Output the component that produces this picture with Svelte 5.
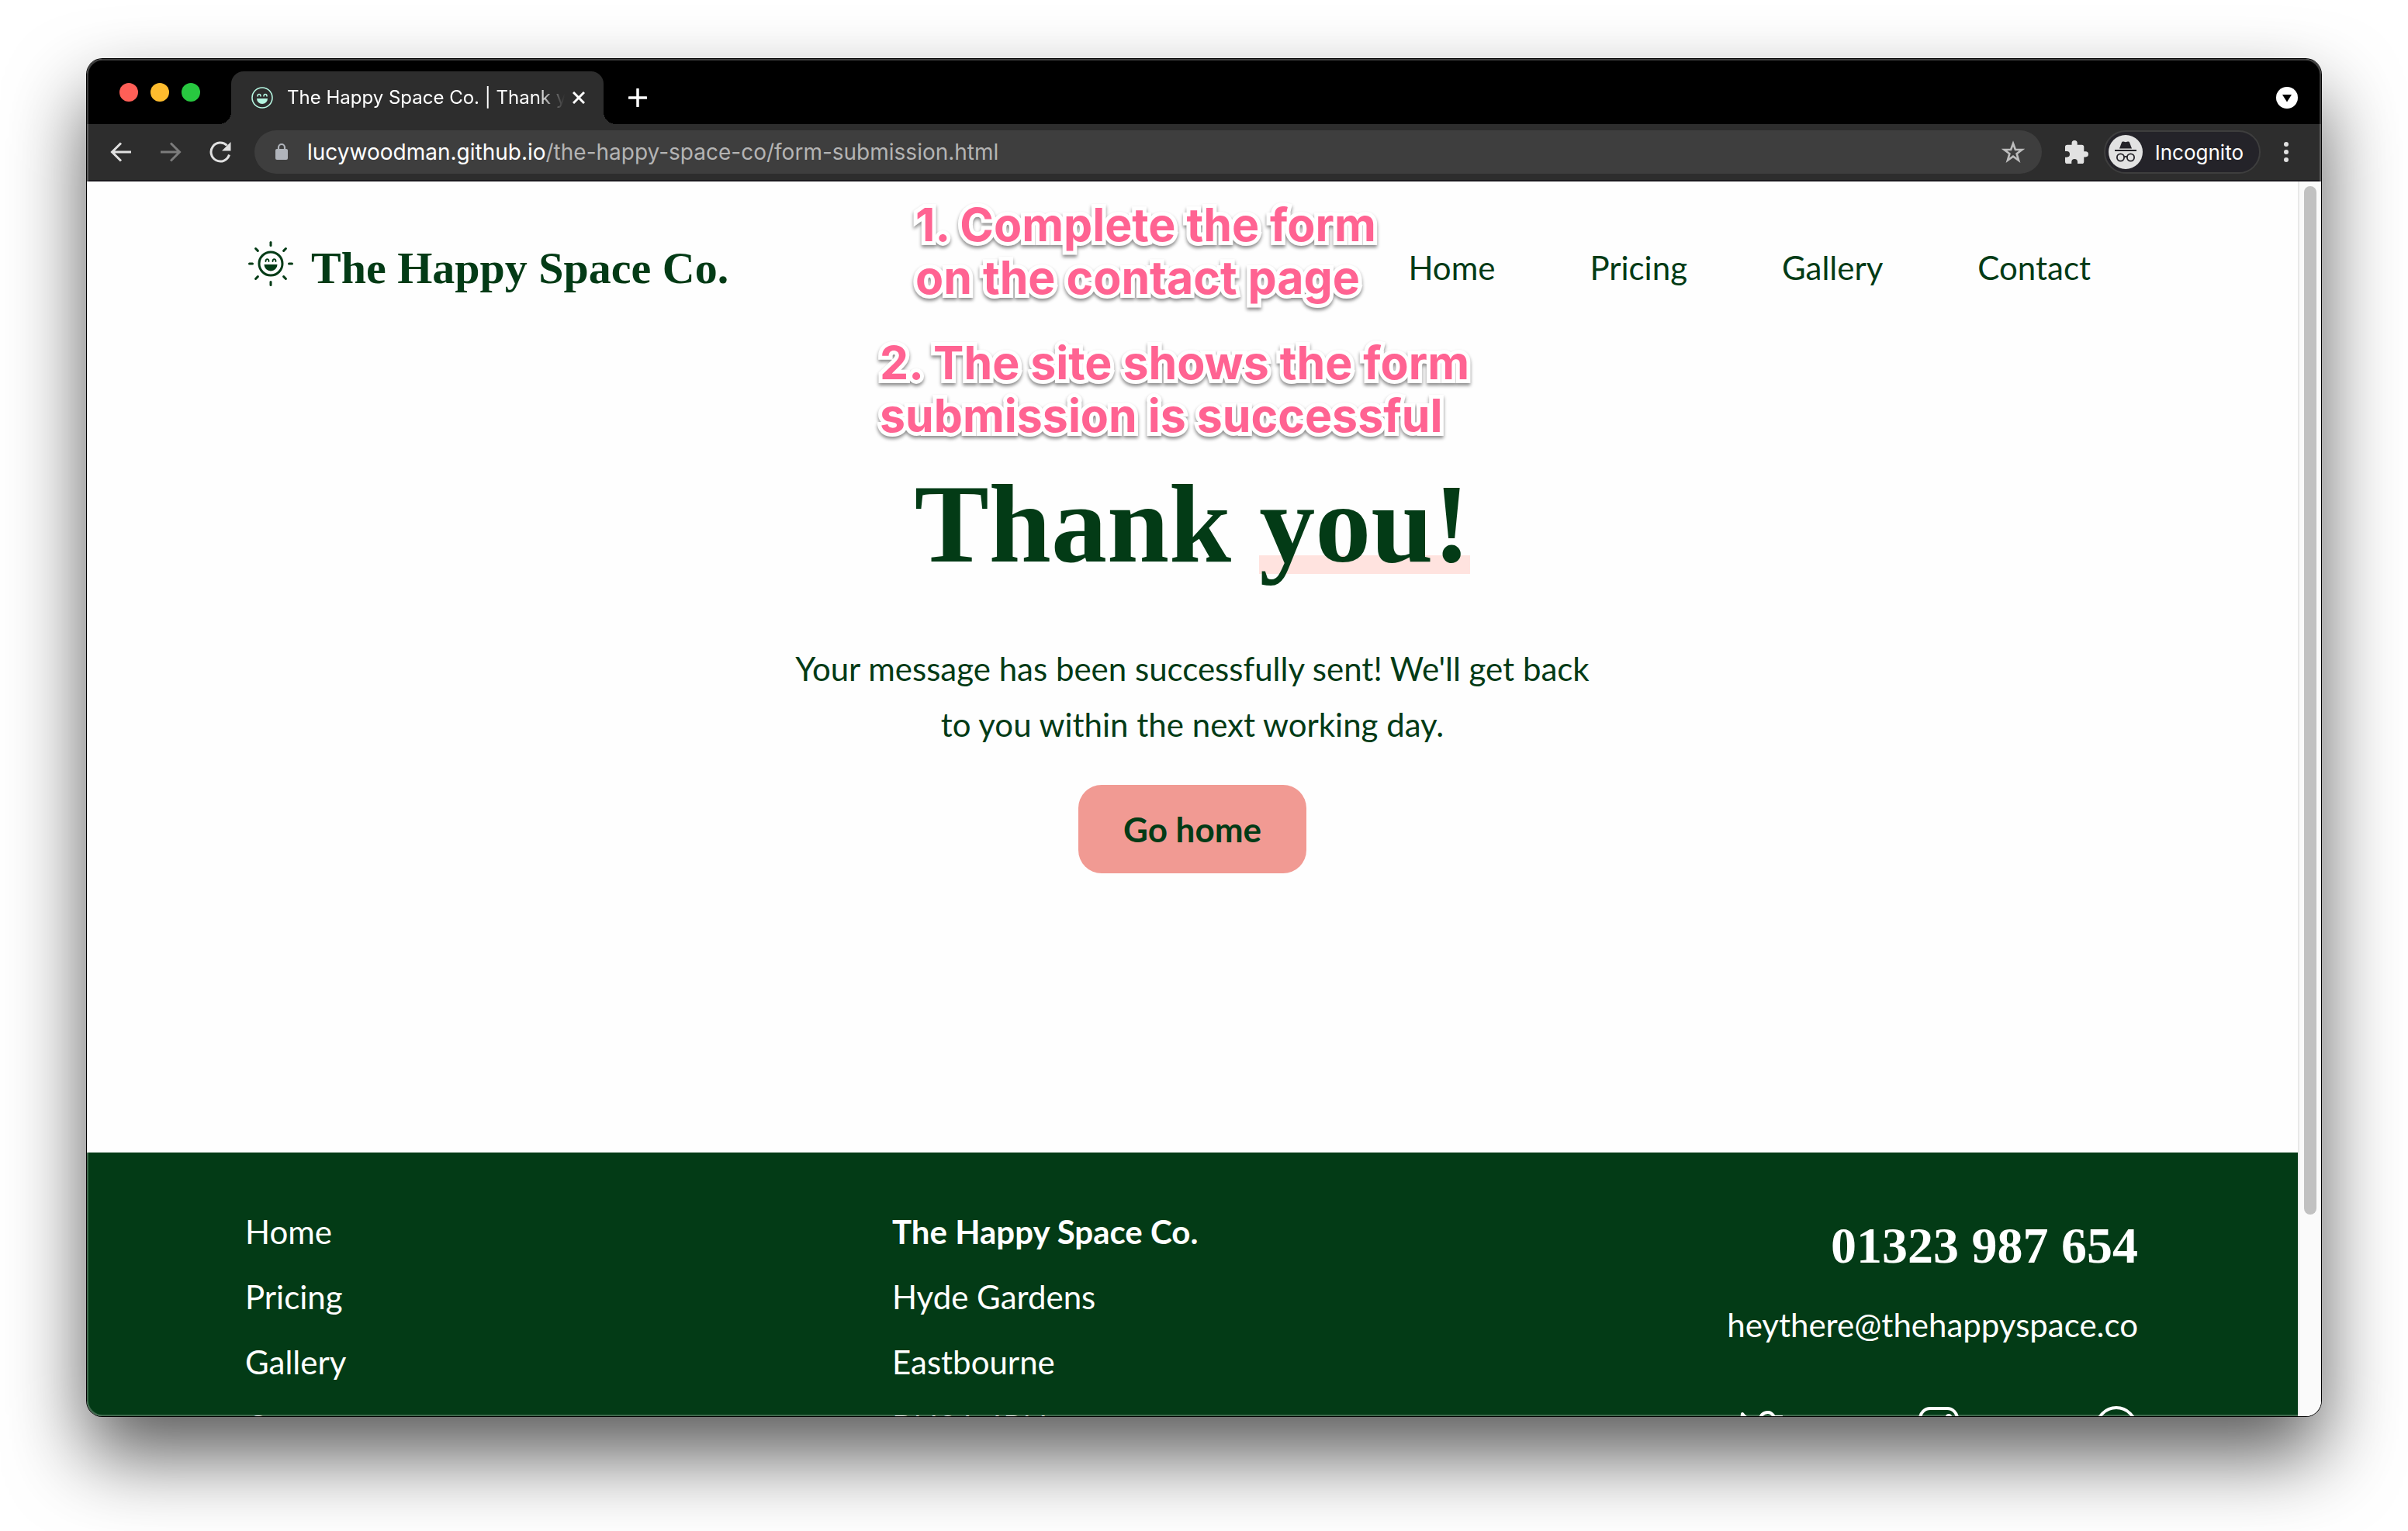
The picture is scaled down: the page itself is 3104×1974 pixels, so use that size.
<script>
  const links = ['Home', 'Pricing', 'Gallery', 'Contact'];
  const address = ['Hyde Gardens', 'Eastbourne', 'BN21 4PN'];
  const rays = [0, 45, 90, 135, 180, 225, 270, 315];
</script>

<div class="desktop">
  <div class="window">
    <div class="tabs">
      <div class="lights">
        <button class="light red" aria-label="Close window"></button>
        <button class="light amber" aria-label="Minimise window"></button>
        <button class="light green" aria-label="Zoom window"></button>
      </div>
      <div class="tab">
        <svg class="favicon" viewBox="0 0 28 28" aria-hidden="true">
          <circle cx="14" cy="14" r="13" fill="none" stroke="#b4f5e0" stroke-width="1.600" />
          <path d="M8 12q0-2.500 2-2.500t2 2.500M16 12q0-2.500 2-2.500t2 2.500" fill="none" stroke="#b4f5e0" stroke-width="1.500" stroke-linecap="round" />
          <path d="M7 15h14a7 7 0 0 1-14 0z" fill="#b4f5e0" />
        </svg>
        <span class="title">The Happy Space Co. | Thank you!</span>
        <button class="icon" aria-label="Close tab">
          <svg width="16" height="16" viewBox="0 0 16 16"><path d="M1 1l14 14M15 1L1 15" stroke="#fff" stroke-width="3" /></svg>
        </button>
      </div>
      <button class="icon plus" aria-label="New tab">
        <svg width="24" height="24" viewBox="0 0 24 24"><path d="M12 1v22M1 12h22" stroke="#fff" stroke-width="3.500" stroke-linecap="round" /></svg>
      </button>
      <button class="icon search" aria-label="Search tabs">
        <svg width="28" height="28" viewBox="0 0 28 28"><circle cx="14" cy="14" r="14" fill="#fff" /><path d="M8 10h12l-6 9.500z" fill="#000" /></svg>
      </button>
    </div>

    <div class="toolbar">
      <div class="history">
        <button class="icon" aria-label="Back">
          <svg width="28" height="28" viewBox="0 0 28 28" fill="none" stroke="#e0e0e0" stroke-width="3"><path d="M27 14H3M14 2.500L2.500 14 14 25.500" /></svg>
        </button>
        <button class="icon" aria-label="Forward">
          <svg width="28" height="28" viewBox="0 0 28 28" fill="none" stroke="#7c7c7c" stroke-width="3"><path d="M1 14h24M14 2.500L25.500 14 14 25.500" /></svg>
        </button>
        <button class="icon" aria-label="Reload">
          <svg width="28" height="28" viewBox="0 0 28 28"><path d="M25.500 17.500A12 12 0 1 1 22.500 5.500" fill="none" stroke="#e0e0e0" stroke-width="3" /><path d="M27.500 1v11.500H16z" fill="#e0e0e0" /></svg>
        </button>
      </div>
      <div class="omnibox">
        <svg width="18" height="24" viewBox="0 0 18 24" aria-hidden="true"><rect x="1" y="8" width="16" height="14" rx="2" fill="#b0b4bb" /><path d="M5 9V6a4 4 0 0 1 8 0v3" fill="none" stroke="#b0b4bb" stroke-width="2.200" /></svg>
        <span class="url"><span class="host">lucywoodman.github.io</span>/the-happy-space-co/form-submission.html</span>
        <button class="icon" aria-label="Bookmark this page">
          <svg width="30" height="30" viewBox="0 0 30 30"><path d="M15 4l2.900 8h8.600l-6.900 5.200 2.500 8.500L15 20.700l-7.100 5 2.500-8.500L3.500 12h8.600z" fill="none" stroke="#bdbdbd" stroke-width="2.600" /></svg>
        </button>
      </div>
      <button class="icon" aria-label="Extensions">
        <svg width="30" height="30" viewBox="2 1 21 21"><path d="M20.500 11H19V7a2 2 0 0 0-2-2h-4V3.500a2.500 2.500 0 0 0-5 0V5H4a2 2 0 0 0-2 2v3.800h1.500a2.700 2.700 0 0 1 0 5.400H2V20a2 2 0 0 0 2 2h3.800v-1.500a2.700 2.700 0 0 1 5.400 0V22H17a2 2 0 0 0 2-2v-4h1.500a2.500 2.500 0 0 0 0-5z" fill="#e2e2e2" /></svg>
      </button>
      <button class="profile">
        <svg width="44" height="44" viewBox="0 0 44 44" aria-hidden="true">
          <circle cx="22" cy="22" r="22" fill="#e2e2e2" />
          <path d="M14 17.500l3-8q.7-1.500 2.200-1l2.800.8 2.800-.8q1.500-.5 2.200 1l3 8z" fill="#242329" />
          <path d="M8 20h28" stroke="#242329" stroke-width="2" />
          <g fill="none" stroke="#242329" stroke-width="1.800"><circle cx="15.500" cy="29" r="4.600" /><circle cx="28.500" cy="29" r="4.600" /><path d="M20 28.500q2-1.400 4 0" /></g>
        </svg>
        Incognito
      </button>
      <button class="icon" aria-label="Menu">
        <svg width="6" height="28" viewBox="0 0 6 28" fill="#e0e0e0"><circle cx="3" cy="4" r="3" /><circle cx="3" cy="14" r="3" /><circle cx="3" cy="24" r="3" /></svg>
      </button>
    </div>

    <div class="viewport">
      <div class="page">
        <header>
          <a class="brand" href="#home">
            <svg width="60" height="60" viewBox="0 0 60 60" fill="none" stroke="#033b16" stroke-width="3" stroke-linecap="round" aria-hidden="true">
              <circle cx="30" cy="30" r="15" />
              <path d="M23.500 27q0-2.800 2-2.800t2 2.800M32.500 27q0-2.800 2-2.800t2 2.800" stroke-width="1.800" />
              <path d="M21.500 31h17a8.500 8.500 0 0 1-17 0z" fill="#033b16" stroke="none" />
              {#each rays as angle}
                <path d="M30 2.500v4" transform="rotate({angle} 30 30)" />
              {/each}
            </svg>
            The Happy Space Co.
          </a>
          <nav>
            {#each links as link}
              <a href="#{link.toLowerCase()}">{link}</a>
            {/each}
          </nav>
        </header>

        <main>
          <h1>Thank <span class="marked">you!</span></h1>
          <p>Your message has been successfully sent! We'll get back to you within the next working day.</p>
          <a class="button" href="#home">Go home</a>
        </main>

        <footer>
          <ul>
            {#each links as link}
              <li><a href="#{link.toLowerCase()}">{link}</a></li>
            {/each}
          </ul>
          <ul>
            <li><strong>The Happy Space Co.</strong></li>
            {#each address as line}
              <li>{line}</li>
            {/each}
          </ul>
          <div class="contact">
            <a class="phone" href="tel:01323987654">01323 987 654</a>
            <a class="email" href="mailto:heythere@thehappyspace.co">heythere@thehappyspace.co</a>
            <div class="social">
              <a href="#twitter" aria-label="Twitter">
                <svg width="56" height="56" viewBox="0 0 56 56" fill="none" stroke="#fff" stroke-width="4" stroke-linejoin="round"><path d="M4 11c6 8 14 10 23 10-1-7 3-12 10-12 4 0 6 2 8 6h10l-6 8c0 16-13 29-30 29-7 0-13-2-17-5 6 0 11-2 14-5C7 37 2 25 4 11z" /></svg>
              </a>
              <a href="#instagram" aria-label="Instagram">
                <svg width="56" height="56" viewBox="0 0 56 56" fill="none" stroke="#fff" stroke-width="4"><rect x="4" y="4" width="48" height="48" rx="13" /><circle cx="28" cy="28" r="11" /><circle cx="41" cy="15" r="2" fill="#fff" /></svg>
              </a>
              <a href="#pinterest" aria-label="Pinterest">
                <svg width="56" height="56" viewBox="0 0 56 56" fill="none" stroke="#fff" stroke-width="4"><circle cx="28" cy="28" r="25" /><path d="M23 46l7-26M20 32c-5-9 2-17 10-16 9 1 11 10 7 17-3 5-9 5-10 1" stroke-linecap="round" /></svg>
              </a>
            </div>
          </div>
        </footer>
      </div>
      <div class="scrollbar"><div class="thumb"></div></div>
      <p class="note first">1. Complete the form<br />on the contact page</p>
      <p class="note second">2. The site shows the form<br />submission is successful</p>
    </div>
  </div>
</div>

<style>
  :global(body) {
    margin: 0;
    background: #fff;
  }
  .desktop {
    box-sizing: border-box;
    height: 100vh;
    padding: 76px 112px 148px;
    font-family: Inter, sans-serif;
  }
  .window {
    position: relative;
    display: flex;
    flex-direction: column;
    height: 100%;
    overflow: hidden;
    border-radius: 20px;
    background: #fefefe;
    box-shadow: 0 0 0 1px #000, 0 50px 100px rgba(0, 0, 0, 0.65);
  }
  .window::after {
    content: '';
    position: absolute;
    inset: 0;
    border: 2px solid rgba(255, 255, 255, 0.24);
    border-radius: 20px;
    pointer-events: none;
  }
  button {
    padding: 0;
    border: 0;
    background: none;
    font: inherit;
    color: inherit;
  }
  a {
    color: inherit;
    text-decoration: none;
  }
  svg {
    display: block;
    flex: none;
  }
  .tabs {
    display: flex;
    flex: none;
    align-items: flex-end;
    height: 84px;
    padding: 0 30px 0 42px;
    background: #000;
    color: #fff;
  }
  .lights {
    display: flex;
    gap: 16px;
    width: 144px;
    padding-bottom: 29px;
  }
  .light {
    width: 24px;
    height: 24px;
    border-radius: 50%;
  }
  .red { background: #ff5f57; }
  .amber { background: #febc2e; }
  .green { background: #28c840; }
  .tab {
    position: relative;
    display: flex;
    align-items: center;
    box-sizing: border-box;
    width: 480px;
    height: 68px;
    padding: 0 24px 0 26px;
    border-radius: 16px 16px 0 0;
    background: #2d2d2d;
  }
  .tab::before,
  .tab::after {
    content: '';
    position: absolute;
    bottom: 0;
    width: 16px;
    height: 16px;
  }
  .tab::before {
    right: 100%;
    background: radial-gradient(circle at 0 0, #000 16px, #2d2d2d 16px);
  }
  .tab::after {
    left: 100%;
    background: radial-gradient(circle at 100% 0, #000 16px, #2d2d2d 16px);
  }
  .favicon {
    width: 28px;
    height: 28px;
  }
  .title {
    flex: 1;
    margin: 0 10px 0 18px;
    overflow: hidden;
    white-space: nowrap;
    font-size: 24px;
    line-height: 32px;
    mask-image: linear-gradient(90deg, #000 90%, transparent);
  }
  .plus {
    padding: 0 0 22px 32px;
  }
  .search {
    margin-left: auto;
    padding-bottom: 20px;
  }
  .toolbar {
    display: flex;
    flex: none;
    align-items: center;
    gap: 30px;
    height: 72px;
    padding: 0 42px 0 30px;
    border-bottom: 2px solid #1c1a1f;
    background: #2d2d2d;
    color: #fff;
  }
  .history {
    display: flex;
    gap: 36px;
  }
  .omnibox {
    display: flex;
    align-items: center;
    flex: 1;
    gap: 24px;
    height: 56px;
    padding: 0 22px 0 26px;
    border-radius: 28px;
    background: #3e3e3e;
  }
  .url {
    flex: 1;
    font-size: 28px;
    color: #b4b4b4;
  }
  .host {
    color: #fff;
  }
  .profile {
    display: flex;
    align-items: center;
    gap: 16px;
    box-sizing: border-box;
    height: 56px;
    margin-left: -10px;
    padding: 0 20px 0 4px;
    border: 2px solid #3e3e3e;
    border-radius: 28px;
    background: #242329;
    font-size: 26px;
  }
  .viewport {
    position: relative;
    display: flex;
    flex: 1;
    min-height: 0;
    overflow: hidden;
  }
  .page {
    flex: 1;
    color: #033b16;
    font-family: Lato, sans-serif;
    font-size: 42px;
  }
  header {
    display: flex;
    align-items: center;
    justify-content: space-between;
    height: 222px;
    padding: 0 206px 0 207px;
  }
  .brand {
    display: flex;
    align-items: center;
    gap: 22px;
    font: bold 58px 'Liberation Serif', serif;
  }
  .brand svg {
    margin-bottom: 10px;
  }
  nav {
    display: flex;
  }
  nav a {
    padding: 0 61px;
  }
  main {
    box-sizing: border-box;
    display: flex;
    flex-direction: column;
    align-items: center;
    padding: 130px 0 360px;
    text-align: center;
  }
  h1 {
    margin: 0;
    font: bold 144px/180px 'Liberation Serif', serif;
  }
  .marked {
    background: linear-gradient(#ffe3df, #ffe3df) 0 120px / 100% 24px no-repeat;
  }
  main p {
    max-width: 1040px;
    margin: 60px 0 42px;
    line-height: 72px;
  }
  .button {
    padding: 0 58px;
    border-radius: 30px;
    background: #f19a93;
    font-size: 44px;
    font-weight: bold;
    line-height: 114px;
  }
  footer {
    display: grid;
    grid-template-columns: 834px 1fr auto;
    padding: 60px 206px 80px 204px;
    background: #033b16;
    color: #fff;
  }
  ul {
    margin: 0;
    padding: 0;
    list-style: none;
    line-height: 84px;
  }
  .contact {
    display: flex;
    flex-direction: column;
    align-items: flex-end;
  }
  .phone {
    font: bold 66px/120px 'Liberation Serif', serif;
  }
  .email {
    line-height: 84px;
  }
  .social {
    display: flex;
    justify-content: space-between;
    align-self: stretch;
    margin-top: 62px;
    padding-left: 16px;
  }
  .scrollbar {
    box-sizing: border-box;
    width: 30px;
    padding: 6px 6px 0;
    border-left: 2px solid #e8e8e8;
    background: #fafafa;
  }
  .thumb {
    width: 16px;
    height: 1326px;
    border-radius: 8px;
    background: #c1c1c1;
  }
  .note {
    position: absolute;
    margin: 0;
    color: #ff6392;
    font-size: 59px;
    font-weight: 700;
    line-height: 68px;
    white-space: nowrap;
    paint-order: stroke fill;
    -webkit-text-stroke: 10px #fff;
    filter: drop-shadow(0 3px 2px rgba(0, 0, 0, 0.45));
  }
  .first {
    left: 1068px;
    top: 22px;
  }
  .second {
    left: 1022px;
    top: 200px;
  }
</style>
